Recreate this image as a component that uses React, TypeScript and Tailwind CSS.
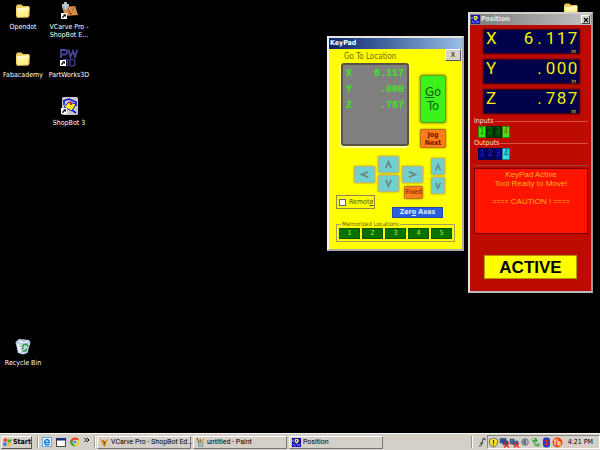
import type { ReactNode } from "react";

const SANS = "font-['DejaVu_Sans_Condensed','DejaVu_Sans',sans-serif]";

function FolderIcon() {
  return (
    <svg viewBox="0 0 16 16" className="size-4" aria-hidden="true">
      <path d="M1 3.5 L2 1.5 H6.5 L8 3 H14 L14.5 5 V13 L13 14.5 H2 L1 13 Z" fill="#e8c95a" />
      <path d="M1.5 5 L14.5 4 L13.5 14 L2 14.5 Z" fill="#fdf08f" />
      <path d="M2 5.5 L14 4.5 L13.8 7 L2 8.5 Z" fill="#fff9c4" />
      <path d="M2 14.5 L13.5 14 L14.5 5" fill="none" stroke="#c9a030" strokeWidth="0.7" />
    </svg>
  );
}

function Shortcut() {
  return (
    <g>
      <rect x="0" y="11" width="6" height="6" fill="#fff" />
      <path d="M1.2 16 C1.2 14 2 13.5 3 13.3 L2.2 12.3 H5 V15 L4 14.2 C3 14.5 2.5 15 2.3 16 Z" fill="#111" />
    </g>
  );
}

function VCarveIcon() {
  return (
    <svg viewBox="0 0 17 17" className="h-[17px] w-[17px]" aria-hidden="true">
      <path d="M1 5 L14 4 L17 13 L4 14 Z" fill="#d98a48" />
      <path d="M7 6 L10 12 L14 5" fill="none" stroke="#9b5420" strokeWidth="1.6" />
      <path d="M8 6 L10.8 11 L14.7 5" fill="none" stroke="#f3b773" strokeWidth="0.8" />
      <path d="M3 0 H6 V2 H8 V5 L5.5 8 H4 L1 5 V2 H3 Z" fill="#a4b2bd" />
      <path d="M1 3 H8 M4.5 0 V7" stroke="#dfe6ea" strokeWidth="0.6" />
      <Shortcut />
    </svg>
  );
}

function PartWorksIcon() {
  return (
    <svg viewBox="0 0 18 18" className="h-[18px] w-[18px]" aria-hidden="true">
      <g fill="none" stroke="#45459b" strokeWidth="1.8">
        <path d="M1 9 V1 H5 Q7 1 7 3 Q7 5.5 5 5.5 H1" />
        <path d="M8.5 0.5 L10.5 8 L13 2 L15 8 L17.3 0.5" />
        <path d="M3 10.5 H7 Q9 12 7 13.5 Q9 15 7 17 H5" strokeWidth="1.2" />
        <path d="M10 10.5 V17 H12 Q15 17 15 13.7 Q15 10.5 12 10.5 Z" strokeWidth="1.2" />
      </g>
      <Shortcut />
    </svg>
  );
}

function ShopBotIcon() {
  return (
    <svg viewBox="0 0 17 18" className="h-[18px] w-[17px]" aria-hidden="true">
      <rect x="1" width="16" height="18" rx="1.5" fill="#c8c8c8" />
      <path d="M3 10 L8 5 L15 7 L11 14 Z" fill="#ffee16" stroke="#1616d8" strokeWidth="1" />
      <path d="M2 4 L8 2 L15 5 V9 M3 4 V8 M11 13 L15 16 M6 13 L4 15" fill="none" stroke="#1616d8" strokeWidth="1.6" />
      <path d="M8 4 L11 5 V8 L9 8 Z" fill="#e62b12" />
      <Shortcut />
    </svg>
  );
}

function RecycleIcon() {
  return (
    <svg viewBox="0 0 16 17" className="h-[17px] w-4" aria-hidden="true">
      <path d="M0.5 4 L4 1 L14 2 L15.5 4 L12.5 15 L8 16.5 L3 15 Z" fill="#c3d9ee" />
      <path d="M1 4 L5 2 L9 4 L13 2 L15 4 L9 6 Z" fill="#f5f9fc" stroke="#7a9cc4" strokeWidth="0.6" />
      <path d="M3 6 L5 14" stroke="#fff" strokeWidth="1.5" />
      <path d="M7 9 L9 6.5 H12 L12.8 9 M12 10.5 L10.5 13 H7.5 M7 11 L9 9.5" fill="none" stroke="#2f9c36" strokeWidth="1.5" />
    </svg>
  );
}

function BotIcon() {
  return (
    <svg viewBox="0 0 9 9" className="size-[9px] shrink-0" aria-hidden="true">
      <rect width="9" height="9" fill="#1518b8" />
      <path d="M3 1 H6 L7 3 L5 5.5 H4 L2.5 3 Z" fill="#f4e94a" />
      <path d="M4 2 H5 V3.5 H4 Z" fill="#1518b8" />
      <path d="M1 6 L3.5 8 M5 7 H8 M1 2 V4" stroke="#a6b5f2" strokeWidth="0.9" />
    </svg>
  );
}

function DesktopItem({ icon, label }: { icon: ReactNode; label: string }) {
  return (
    <button className="flex h-12 w-11 flex-col items-center gap-1 text-center text-[7px] leading-[8px] text-white">
      <span className="flex h-[18px] items-end">{icon}</span>
      <span className="whitespace-pre">{label}</span>
    </button>
  );
}

function SegmentDigits({ value, cell }: { value: string; cell: string }) {
  return (
    <span className="flex">
      {value.split("").map((c, i) => (
        <span key={i} className={`${cell} text-center`}>{c}</span>
      ))}
    </span>
  );
}

const axes = [
  ["X", "6.117"],
  ["Y", ".000"],
  ["Z", ".787"],
];

function Arrow({ d, label, small }: { d: string; label: string; small?: boolean }) {
  return (
    <button
      aria-label={label}
      className={`flex h-[17px] shrink-0 items-center justify-center rounded-[2px] border border-[#b9b58a] bg-[#6fd0cf] shadow-[0_0_2px_#777733] ${small ? "w-[14px]" : "w-[21px]"}`}
    >
      <svg viewBox="0 0 10 10" className={small ? "size-2" : "size-[9px]"} aria-hidden="true">
        <path d={d} fill="none" stroke="#6f8580" strokeWidth="1.9" />
      </svg>
    </button>
  );
}

const UP = "M2 9 L5 2 L8 9";
const DOWN = "M2 1 L5 8 L8 1";
const LEFT = "M9 2 L2 5 L9 8";
const RIGHT = "M1 2 L8 5 L1 8";

function KeyPad() {
  return (
    <section aria-label="KeyPad" className="absolute top-9 left-[327px] w-[137px] border-2 border-t-[#e6e6df] border-r-[#aaa] border-b-[#aaa] border-l-[#f3f3f3] bg-[#ffff00] pb-[7px]">
      <h2 className="h-[11px] bg-linear-to-r from-[#0a246a] to-[#9bbfe8] pl-px text-[7px] leading-[11px] font-bold text-white">KeyPad</h2>
      <div className="flex h-3 items-start justify-between pr-px pl-[15px]">
        <span className="pt-[2px] text-[8px] leading-[11px] text-[#776a00]">Go To Location</span>
        <button aria-label="Close keypad" className="h-3 w-4 border border-t-white border-r-[#555] border-b-[#555] border-l-white bg-[#d6d2c4] text-[7px] leading-[9px] text-black">X</button>
      </div>
      <div className="flex gap-[11px] pt-[2px] pl-3">
        <div className="h-[83px] w-[68px] rounded-[3px] border-2 border-[#555542] bg-[#808080] py-px pr-[3px] pl-[3px] font-['Liberation_Mono',monospace] text-[10px] leading-4 font-bold text-[#37e819] shadow-[-1px_2px_1px_#ffffb0]">
          {axes.map(([axis, value]) => (
            <div key={axis} className="flex justify-between">
              <span>{axis}</span>
              <SegmentDigits value={value} cell="w-[6px]" />
            </div>
          ))}
        </div>
        <div className="flex flex-col gap-[6px] pt-[12px]">
          <button className="h-12 w-[26px] rounded-[3px] border border-[#679c1a] bg-[#3cf21c] text-[13px] leading-[14px] text-[#11600b] shadow-[0_0_3px_#666600]">
            <u>G</u>o<br />To
          </button>
          <button className="h-[19px] w-[26px] rounded-[2px] border border-[#c1701d] bg-[#ff7d16] text-[7px] leading-[8px] font-bold text-[#701500] shadow-[0_0_2px_#886600]">
            <u>J</u>og<br />Next
          </button>
        </div>
      </div>
      <div className="flex h-11 gap-[3px] pt-2 pl-[25px]">
        <div className="pt-[10px]"><Arrow d={LEFT} label="Left" /></div>
        <div className="flex flex-col gap-[2px]">
          <Arrow d={UP} label="Up" />
          <Arrow d={DOWN} label="Down" />
        </div>
        <div className="flex flex-col items-end gap-[3px] pt-[10px]">
          <Arrow d={RIGHT} label="Right" />
          <button className="h-[13px] w-[19px] shrink-0 rounded-[2px] border border-[#c1701d] bg-[#ff7d16] text-[7px] leading-[11px] text-[#701500] shadow-[0_0_2px_#886600]">Fixed</button>
        </div>
        <div className="flex flex-col gap-[2px] pt-[2px] pl-[5px]">
          <Arrow d={UP} label="Raise" small />
          <Arrow d={DOWN} label="Lower" small />
        </div>
      </div>
      <div className="flex gap-[17px] pt-[3px] pl-[7px]">
        <label className="flex h-[14px] w-[39px] items-center gap-[3px] border border-[#8f8b4a] pl-[2px] text-[7px] text-[#5f5100]">
          <input type="checkbox" className="size-[7px] shrink-0 appearance-none border border-[#666] bg-white" />
          <span>Remot<u>e</u></span>
        </label>
        <button className="mt-3 h-[11px] w-[51px] border border-[#254b9e] bg-[#2c5fdf] text-[7px] leading-[9px] font-bold text-[#d9efff]">
          Zer<u>o</u> Axes
        </button>
      </div>
      <fieldset className="mx-[7px] mt-[2px] border border-[#a4a05a] px-[2px] pb-[2px]">
        <legend className="ml-[2px] px-px text-[6px] leading-[8px] text-[#6b5c00]">Memorized Locations</legend>
        <div className="grid grid-cols-5 gap-[2px]">
          {[1, 2, 3, 4, 5].map((n) => (
            <button key={n} className="h-[11px] border border-[#0c5500] bg-[#087200] text-[7px] leading-[9px] text-[#c7e83c]">{n}</button>
          ))}
        </div>
      </fieldset>
    </section>
  );
}

function Bits({ title, colors }: { title: string; colors: string[] }) {
  return (
    <div>
      <div className="flex items-center gap-px text-[7px] leading-[10px] text-[#ffe0bd]">
        <h3>{title}</h3>
        <span className="h-px flex-1 bg-[#d4503f]" />
      </div>
      <div className="ml-1 flex h-3 w-8 text-[8px] leading-[10px]">
        {colors.map((c, i) => (
          <span key={i} className={`flex-1 rounded-[1px] border border-black/40 text-center ${c}`}>{i + 1}</span>
        ))}
      </div>
    </div>
  );
}

function Position() {
  return (
    <section aria-label="Position" className="absolute top-3 left-[468px] w-[125px] border-2 border-t-[#d4d0c8] border-r-[#999] border-b-[#bbb] border-l-[#e4e4e4] bg-[#bd0b00] pb-3">
      <header className="flex h-[11px] items-center gap-px bg-linear-to-r from-[#7b7b7b] to-[#c2c2c2] pl-px">
        <BotIcon />
        <h2 className="flex-1 text-[7px] leading-[11px] font-bold text-[#e6e6e6]">Position</h2>
        <button aria-label="Close position" className="mr-px flex size-[9px] items-center justify-center border border-t-white border-r-[#444] border-b-[#444] border-l-white bg-[#d6d2c8]">
          <svg viewBox="0 0 6 6" className="size-[6px]" aria-hidden="true"><path d="M1 1 L5 5 M5 1 L1 5" stroke="#000" strokeWidth="1.1" /></svg>
        </button>
      </header>
      <div className="flex flex-col gap-[5px] pt-1 pr-[11px] pl-[13px]">
        {axes.map(([axis, value]) => (
          <div key={axis} className="h-[25px] border border-[#500010] bg-[#00004b] pr-px pl-[2px] font-['Roboto',sans-serif] text-[#f0f000] shadow-[0_0_2px_#500000]">
            <div className="flex h-[17px] justify-between text-[17px] leading-[17px]">
              <span>{axis}</span>
              <SegmentDigits value={value} cell="w-[11px]" />
            </div>
            <div className="mr-[2px] text-right text-[6px] leading-[7px] text-[#d8d800]">in</div>
          </div>
        ))}
      </div>
      <div className="flex flex-col pt-[2px] pr-[3px] pl-1">
        <Bits title="Inputs" colors={["bg-[#35e513] text-[#167c09]", "bg-[#004800] text-[#157515]", "bg-[#004000] text-[#157515]", "bg-[#42e51a] text-[#a94900]"]} />
        <Bits title="Outputs" colors={["bg-[#000080] text-[#3030a5]", "bg-[#00006e] text-[#3030a5]", "bg-[#000080] text-[#3030a5]", "bg-[#31def5] text-[#075b83]"]} />
        <hr className="mt-[5px] border-[#8b4740]" />
        <p className="mt-[2px] h-[66px] border border-[#790000] bg-[#ff1400] pt-px text-center font-['Liberation_Sans',sans-serif] text-[8px] leading-[9px] text-[#ffae15]">
          KeyPad Active<br />Tool Ready to Move!<br /><br /><span className="text-[7px]">====</span> CAUTION ! <span className="text-[7px]">====</span>
        </p>
      </div>
      <div className="mx-[14px] mt-[21px] h-6 border border-[#b39b00] bg-[#ffff00] text-center font-['Liberation_Sans',sans-serif] text-[17px] leading-[23px] font-bold text-black">ACTIVE</div>
    </section>
  );
}

function TaskButton({ icon, children }: { icon: ReactNode; children: ReactNode }) {
  return (
    <button className="flex h-[13px] w-[94px] shrink-0 items-center gap-[2px] border border-t-white border-r-[#777] border-b-[#777] border-l-white pl-[2px] font-['Roboto',sans-serif] text-[7px] whitespace-nowrap text-black">
      {icon}
      <span>{children}</span>
    </button>
  );
}

function Divider() {
  return <span className="h-3 w-[2px] border-l border-[#999] bg-white" />;
}

function Taskbar() {
  return (
    <footer className="flex h-[17px] items-center border-t border-[#f5f3ee] bg-[#d4d0c8] pl-px">
      <button className="flex h-[13px] w-[31px] items-center gap-px border border-t-white border-r-[#555] border-b-[#555] border-l-white pl-px text-[7px] font-bold text-black">
        <svg viewBox="0 0 9 9" className="size-[9px] shrink-0" aria-hidden="true">
          <path d="M1 1 Q3 0 4.3 1 L3.8 4 Q2 3.2 0.5 4 Z" fill="#e8472b" />
          <path d="M5 1.3 Q7 2 8.8 1 L8 4.3 Q6 5 4.5 4.2 Z" fill="#57a832" />
          <path d="M0.5 4.8 Q2 4 3.7 4.8 L3 8 Q1.5 7 0 8 Z" fill="#3c6fe0" />
          <path d="M4.4 5 Q6 6 8 5 L7 8.2 Q5 9 3.8 8 Z" fill="#f5bd24" />
        </svg>
        Start
      </button>
      <nav aria-label="Quick launch" className="flex items-center gap-1 pl-[5px]">
        <Divider />
        <svg viewBox="0 0 10 10" className="-ml-px size-[10px]" aria-hidden="true">
          <rect x="0.5" y="0.5" width="9" height="9" fill="#edf7ff" stroke="#6caad8" />
          <path d="M2.5 5.5 H7.5 Q7 2.5 5 2.5 Q2.5 3 2.5 5.5 Q3 8 5 8 Q6.5 8 7.4 7" fill="none" stroke="#267ed3" strokeWidth="1.4" />
        </svg>
        <svg viewBox="0 0 10 10" className="size-[10px]" aria-hidden="true">
          <rect x="0.5" y="1.5" width="9" height="8" fill="#fff" stroke="#444" />
          <path d="M0 1 H10 V3.5 H0 Z" fill="#17307c" />
        </svg>
        <svg viewBox="0 0 10 10" className="size-[10px]" aria-hidden="true">
          <circle cx="5" cy="5" r="4.5" fill="#f8cb24" />
          <path d="M5 5 L0.8 7 A4.5 4.5 0 0 1 1.4 2.3 A4.5 4.5 0 0 1 9 3 H5 Z" fill="#df3d2e" />
          <path d="M0.9 3 L4 6.5 L5 9.5 A4.5 4.5 0 0 1 0.9 3" fill="#33a54a" />
          <circle cx="5" cy="5" r="2" fill="#3c7de0" stroke="#fff" strokeWidth="0.8" />
        </svg>
        <svg viewBox="0 0 6 6" className="mb-[5px] size-[6px]" aria-hidden="true"><path d="M0.5 1 L2.5 3 L0.5 5 M3 1 L5 3 L3 5" fill="none" stroke="#000" /></svg>
        <Divider />
      </nav>
      <div className="flex flex-1 gap-[2px] pl-px">
        <TaskButton icon={<svg viewBox="0 0 9 9" className="size-[9px] shrink-0" aria-hidden="true"><path d="M0 1 L3 2 L4 4 L8.5 0 L5 9 L3.5 8 Z" fill="#e89614" /><path d="M3 2 L4.5 8 L5 4" fill="#663b00" /></svg>}>VCarve Pro - ShopBot Ed...</TaskButton>
        <TaskButton icon={<svg viewBox="0 0 9 9" className="size-[9px] shrink-0" aria-hidden="true"><path d="M2 4 H7 L6.5 9 H3 Z" fill="#a9b9c1" stroke="#666" strokeWidth="0.5" /><path d="M3 4 L1 0" stroke="#d85925" strokeWidth="1.5" /><path d="M4.5 4 V1" stroke="#49974a" strokeWidth="1.3" /><path d="M6 4 L8 0.5" stroke="#d7a82e" strokeWidth="1.5" /></svg>}>untitled - Paint</TaskButton>
        <TaskButton icon={<BotIcon />}>Position</TaskButton>
      </div>
      <div className="flex items-center gap-[5px]">
        <Divider />
        <svg viewBox="0 0 8 10" className="h-[10px] w-2" aria-hidden="true"><path d="M7 1 L4.5 2.5 V5.5 L2 6.5 M5 5 L3 8.5 L0.8 9 M5.5 1 L7.5 3" fill="none" stroke="#555" strokeWidth="1.1" /></svg>
      </div>
      <div className="ml-px flex h-[14px] items-center border border-t-[#888] border-r-white border-b-white border-l-[#888] pr-[6px] pl-px text-[7px] text-black">
        <svg viewBox="0 0 74 11" className="mr-[5px] h-[11px] w-[74px]" aria-label="System tray">
          <path d="M4.5 1 L8.5 2.5 V6 Q8 9 4.5 10.5 Q1 9 0.5 6 V2.5 Z" fill="#ffe11c" stroke="#6f7583" />
          <path d="M4.5 3 V6.5 M4.5 7.5 V8.7" stroke="#333" strokeWidth="1.2" />
          <path d="M11 1.5 H17 V6 H11 Z M14 4 H19 V8 H14 Z" fill="#3d5596" stroke="#253969" strokeWidth="0.5" />
          <path d="M15 6 L20 10.5 M20 6 L15 10.5" stroke="#e32616" strokeWidth="1.3" />
          <path d="M21 2 H25 V7 H21 Z M24 4 H29 V8 H24 Z" fill="#53699e" stroke="#2e3c68" strokeWidth="0.5" />
          <path d="M25 6 L30 10.5 M30 6 L25 10.5" stroke="#e32616" strokeWidth="1.3" />
          <circle cx="36" cy="5" r="3.3" fill="#bbb" stroke="#69727b" /><path d="M34 4 L37 2 V8 L34 6 Z" fill="#68707a" />
          <path d="M42 2 L47 1 L49 4 L45 6 Z M45 6 L51 6 L50 9.5 L46 9 Z" fill="#36a539" />
          <path d="M43 2 L46 3 M46 7 H50" stroke="#dce5db" />
          <rect x="54" y="0.5" width="7" height="10" rx="3" fill="#123cdd" />
          <path d="M55.5 3.5 L59.5 7 L57.5 9 V2 L59.5 4 L55.5 7.5" fill="none" stroke="#d72d30" strokeWidth="1" />
          <circle cx="68.5" cy="5.5" r="5" fill="#f04812" />
          <path d="M66 8 V3 H69 M68 5 Q72 4 71 8 H69 V5" fill="none" stroke="#fff2d0" strokeWidth="1.2" />
        </svg>
        4:21 PM
      </div>
    </footer>
  );
}

export default function App() {
  return (
    <div className={`flex min-h-screen flex-col bg-black ${SANS}`}>
      <main className="relative flex flex-1 items-stretch justify-between">
        <div className="flex gap-[2px] pt-px pl-px">
          <div className="flex flex-col">
            <DesktopItem icon={<FolderIcon />} label="Opendot" />
            <DesktopItem icon={<FolderIcon />} label="Fabacademy" />
            <div className="mt-auto pt-10 pb-12">
              <DesktopItem icon={<RecycleIcon />} label="Recycle Bin" />
            </div>
          </div>
          <div className="flex flex-col">
            <DesktopItem icon={<VCarveIcon />} label={"VCarve Pro -\nShopBot E..."} />
            <DesktopItem icon={<PartWorksIcon />} label="PartWorks3D" />
            <DesktopItem icon={<ShopBotIcon />} label="ShopBot 3" />
          </div>
        </div>
        <div className="pt-[2px] pr-[21px]"><FolderIcon /></div>
        <KeyPad />
        <Position />
      </main>
      <Taskbar />
    </div>
  );
}
